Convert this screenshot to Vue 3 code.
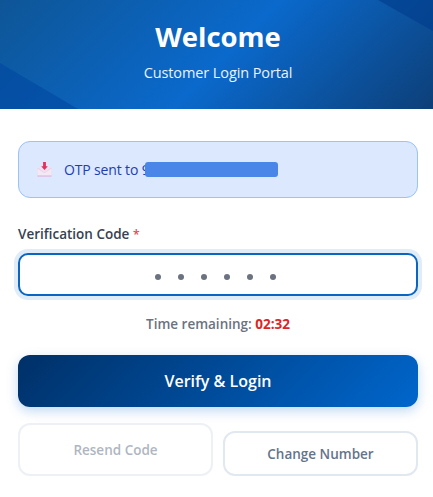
<script setup>
const dots = Array.from({ length: 6 })
</script>

<template>
  <div class="page">
    <header class="hero">
      <h1>Welcome</h1>
      <p>Customer Login Portal</p>
    </header>
    <main class="body">
      <div class="alert">
        <svg class="mail" viewBox="0 0 16 16" width="15" height="15" aria-hidden="true">
          <path d="M.5 6.5h15V15.500H.5z" fill="#e6cfe8" />
          <path d="M.5 5.500h15L8 11.500z" fill="#f2dff0" />
          <path d="M.5 7 8 12l7.500-5v7.500H.5z" fill="#f4e9f3" />
          <path d="M.5 14.500h15v1H.5z" fill="#d9b8e3" />
          <path d="M6.500 0h3v4.500h2L8 8.500l-3.500-4h2z" fill="#e0305f" />
        </svg>
        <span class="alert-text">OTP sent to 9</span>
        <span class="redact"></span>
      </div>
      <label class="label">Verification Code <span class="req">*</span></label>
      <div class="input">
        <i v-for="(d, i) in dots" :key="i" class="dot"></i>
      </div>
      <p class="timer">Time remaining: <b>02:32</b></p>
      <button class="primary">Verify &amp; Login</button>
      <div class="actions">
        <button class="ghost disabled">Resend Code</button>
        <button class="ghost short">Change Number</button>
      </div>
    </main>
  </div>
</template>

<style>
html, body { margin: 0; background: #fff; }
</style>

<style scoped>
.page { width: 433px; height: 497px; overflow: hidden; font-family: "Open Sans", "Noto Sans", sans-serif; background: #fff; }
.hero {
  position: relative; height: 109px; box-sizing: border-box; padding: 19px 0 0 3px; text-align: center; color: #fff; overflow: hidden;
  background: linear-gradient(135deg, #0e5596 0%, #0a69cc 52%, #0d3f78 100%);
}
.hero::before {
  content: ""; position: absolute; inset: 0;
  background: rgba(0, 70, 160, .55);
  clip-path: polygon(0 63px, 78px 109px, 0 109px);
}
.hero::after {
  content: ""; position: absolute; inset: 0;
  background: rgba(0, 60, 140, .6);
  clip-path: polygon(378px 0, 433px 0, 433px 31px);
}
.hero h1 { position: relative; z-index: 1; margin: 0; font-size: 27.5px; line-height: 36px; font-weight: 700; }
.hero p { position: relative; z-index: 1; margin: 8px 0 0; font-size: 14.500px; line-height: 20px; letter-spacing: -.1px; opacity: .92; }
.body { padding: 32px 15px 0 18px; }
.alert {
  height: 57px; box-sizing: border-box; display: flex; align-items: center; padding-left: 18px;
  background: #dbe8fe; border: 1px solid #9bc3f5; border-radius: 12px; color: #1e40af; font-size: 14px; position: relative;
}
.mail { margin-right: 12px; flex: none; }
.alert-text { letter-spacing: -.15px; }
.redact { position: absolute; left: 126px; top: 20px; width: 133px; height: 15px; background: #4a86e8; border-radius: 3px; }
.label { display: block; height: 20px; margin-top: 26px; font-size: 13.5px; line-height: 20px; font-weight: 600; color: #374151; }
.req { color: #ef4444; font-size: 12px; line-height: 1; }
.input {
  margin-top: 9px; height: 43px; box-sizing: border-box; display: flex; justify-content: center; align-items: center; gap: 17.2px;
  padding: 5px 5px 0 0;
  border: 2px solid #0a66c2; border-radius: 10px; box-shadow: 0 0 0 4px #e1ecf9; background: #fff;
}
.dot { width: 6px; height: 6px; border-radius: 50%; background: #6b7280; }
.timer { margin: 18px 0 0; text-align: center; font-size: 13.5px; line-height: 20px; font-weight: 600; color: #6b7280; }
.timer b { color: #dc2626; font-weight: 700; }
button { font-family: inherit; display: block; cursor: pointer; }
.primary {
  margin-top: 21px; width: 100%; height: 52px; border: 0; border-radius: 12px; color: #fff; font-size: 16px; font-weight: 600;
  background: linear-gradient(135deg, #003067 0%, #0066cc 100%); box-shadow: 0 4px 12px rgba(0, 102, 204, .25);
}
.actions { display: flex; align-items: flex-end; gap: 10px; margin-top: 16px; }
.ghost {
  flex: 1; height: 53px; box-sizing: border-box; background: #fff; border: 2px solid #e2e8f0; border-radius: 12px;
  color: #64748b; font-size: 13.5px; font-weight: 600; padding: 0;
}
.short { height: 45px; }
.disabled { opacity: .6; color: #7b8798; }
</style>
